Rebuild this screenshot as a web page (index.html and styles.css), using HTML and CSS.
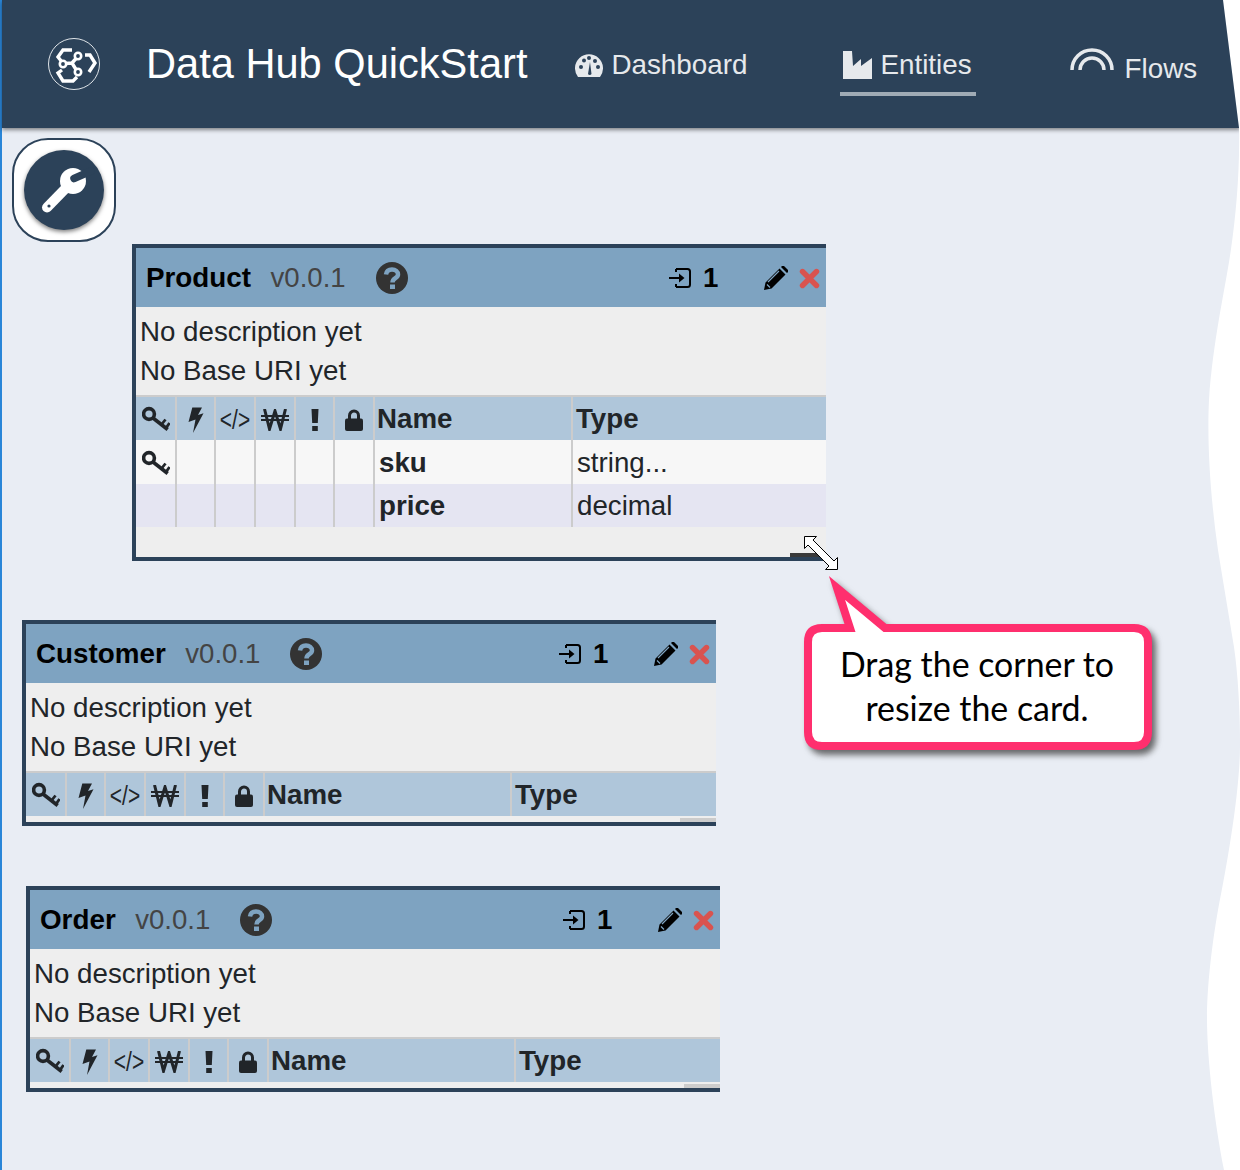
FILE: index.html
```html
<!DOCTYPE html>
<html lang="en">
<head>
<meta charset="UTF-8" />
<title>Data Hub QuickStart</title>
<link rel="stylesheet" href="styles.css">
</head>
<body>
<svg class="sprite" width="0" height="0">
  <defs>
    <symbol id="i-key" viewBox="0 0 28 28">
      <g fill="none" stroke="currentColor" stroke-width="3.600">
        <circle cx="7" cy="8" r="5.400"/>
        <path d="M11 12L25.700 23.500"/>
      </g>
      <g fill="none" stroke="currentColor" stroke-width="2.800">
        <path d="M19.500 18.500L23.500 13.500M24 22L27.500 17"/>
      </g>
    </symbol>
    <symbol id="i-bolt" viewBox="0 0 16 28">
      <path fill="currentColor" d="M4.300 1.500H14L10 9L15.500 7.300L5 27L7.500 13.500L.5 16Z"/>
    </symbol>
    <symbol id="i-won" viewBox="0 0 28 22">
      <path fill="none" stroke="currentColor" stroke-width="3" d="M3.500 0L8.500 20L14 2L19.500 20L24.500 0"/>
      <path fill="none" stroke="currentColor" stroke-width="2" d="M0 7H28M0 11H28"/>
    </symbol>
    <symbol id="i-bang" viewBox="0 0 8 22">
      <path fill="currentColor" d="M.5 0H7.500L6.800 14H1.200ZM1.200 17H6.800V22H1.200Z"/>
    </symbol>
    <symbol id="i-lock" viewBox="0 0 18 22">
      <path fill="none" stroke="currentColor" stroke-width="3" d="M4.500 10V6.500A4.500 4.500 0 0 1 13.500 6.500V10"/>
      <rect fill="currentColor" y="9.500" width="18" height="12.500" rx="2"/>
    </symbol>
    <symbol id="i-help" viewBox="0 0 32 32">
      <circle fill="currentColor" cx="16" cy="16" r="16"/>
      <path fill="none" stroke="#7ea3c1" stroke-width="4.500" d="M10 12.500C10.500 9 13 7.500 16 7.500C19.500 7.500 22 9.500 22 12.500C22 16.500 16.500 16 16.500 20.500"/>
      <rect fill="#7ea3c1" x="14" y="22.500" width="5" height="4.500"/>
    </symbol>
    <symbol id="i-signin" viewBox="0 0 22 20">
      <path fill="none" stroke="currentColor" stroke-width="2" d="M7 1H18.500Q21 1 21 3.500V16.500Q21 19 18.500 19H7M7 1V4M7 16V19M0 10H13"/>
      <path fill="currentColor" d="M10 5.500L15.500 10L10 14.500Z"/>
    </symbol>
    <symbol id="i-pencil" viewBox="0 0 24 24">
      <path fill="currentColor" d="M0 24L1.500 16.500L15.500 2.500L21.500 8.500L7.500 22.500ZM17 1L18 0Q19 -.5 20 0L24 4Q24.500 5 24 6L23 7Z"/>
      <path fill="none" stroke="#7ea3c1" stroke-width="1.200" d="M4 16L15 5M3 18.500L6 21.500"/>
    </symbol>
    <symbol id="i-times" viewBox="0 0 21 21">
      <path fill="none" stroke="currentColor" stroke-width="5.400" stroke-linecap="round" d="M3.500 3.500L17.500 17.500M17.500 3.500L3.500 17.500"/>
    </symbol>
  </defs>
</svg>

<div class="page">
  <header class="topbar">
    <svg class="logo" viewBox="0 0 52 52">
      <circle cx="26" cy="26" r="25.500" fill="none" stroke="#dfe4e8" stroke-width="1"/>
      <g fill="none" stroke="#fff" stroke-width="3.400">
        <path d="M24 12H15L10 19L14 24"/>
        <path d="M14 32L10 35L15 43H25L29 39"/>
        <path d="M37 17H42L47 25L41 34"/>
        <path d="M24 25L17.500 25.500M24 25L28 20.500M24 25L28 31.500"/>
      </g>
      <g fill="#2c4259" stroke="#fff" stroke-width="2.600">
        <circle cx="30" cy="18" r="3.200"/>
        <circle cx="15" cy="26" r="3.200"/>
        <circle cx="30" cy="34" r="3.200"/>
      </g>
    </svg>
    <h1 class="app-title">Data Hub QuickStart</h1>
    <nav class="nav">
      <a class="nav-item nav-dash">
        <svg class="nav-icon-dash" viewBox="0 0 28 24">
          <path fill="currentColor" d="M3 24A14 14 0 1 1 25 24Z"/>
          <g fill="#2c4259">
            <circle cx="6" cy="14" r="2"/><circle cx="9" cy="7.500" r="2"/><circle cx="14" cy="5" r="2"/><circle cx="20" cy="8" r="2"/><circle cx="23" cy="14" r="2"/>
            <path d="M13 21L15 9L16.500 21A2 2 0 0 1 13 21Z"/>
          </g>
        </svg>
        Dashboard
      </a>
      <a class="nav-item nav-entities active">
        <svg class="nav-icon-ent" viewBox="0 0 29 28">
          <path fill="currentColor" d="M0 0H9L10 15L18 8V15L29 7V28H0Z"/>
        </svg>
        Entities
      </a>
      <a class="nav-item nav-flows">
        <svg class="nav-icon-flow" viewBox="0 0 44 24">
          <path fill="none" stroke="currentColor" stroke-width="3.500" d="M2 23A20 20 0 0 1 42 23M10 23A12 12 0 0 1 34 23"/>
        </svg>
        Flows
      </a>
    </nav>
  </header>

  <main class="canvas">
    <button class="tool-btn">
      <span class="tool-circle">
        <svg viewBox="0 0 80 80" width="80" height="80">
          <circle cx="49" cy="31" r="13" fill="#fff"/>
          <path d="M50 28.500L67 21" stroke="#2c4259" stroke-width="7.500" stroke-linecap="round"/>
          <path d="M43 37L23 57.500" stroke="#fff" stroke-width="10" stroke-linecap="round"/>
          <circle cx="25" cy="56" r="1.600" fill="#2c4259"/>
        </svg>
      </span>
    </button>

    <section class="card card-product">
      <div class="card-head">
        <b class="card-name">Product</b>
        <span class="card-version">v0.0.1</span>
        <svg class="ic-help"><use href="#i-help"/></svg>
        <svg class="ic-signin"><use href="#i-signin"/></svg>
        <b class="card-count">1</b>
        <svg class="ic-pencil"><use href="#i-pencil"/></svg>
        <svg class="ic-times"><use href="#i-times"/></svg>
      </div>
      <div class="card-desc">
        <div>No description yet</div>
        <div>No Base URI yet</div>
      </div>
      <table class="props">
        <thead>
          <tr>
            <th><svg class="ic-key"><use href="#i-key"/></svg></th>
            <th><svg class="ic-bolt"><use href="#i-bolt"/></svg></th>
            <th><span class="code">&lt;/&gt;</span></th>
            <th><svg class="ic-won"><use href="#i-won"/></svg></th>
            <th><svg class="ic-bang"><use href="#i-bang"/></svg></th>
            <th><svg class="ic-lock"><use href="#i-lock"/></svg></th>
            <th class="th-name">Name</th>
            <th class="th-type">Type</th>
          </tr>
        </thead>
        <tbody>
          <tr>
            <td><svg class="ic-key"><use href="#i-key"/></svg></td>
            <td></td><td></td><td></td><td></td><td></td>
            <td class="td-name">sku</td>
            <td class="td-type">string...</td>
          </tr>
          <tr class="alt">
            <td></td><td></td><td></td><td></td><td></td><td></td>
            <td class="td-name">price</td>
            <td class="td-type">decimal</td>
          </tr>
        </tbody>
      </table>
      <div class="handle handle-drag"></div>
    </section>

    <section class="card card-customer">
      <div class="card-head">
        <b class="card-name">Customer</b>
        <span class="card-version">v0.0.1</span>
        <svg class="ic-help"><use href="#i-help"/></svg>
        <svg class="ic-signin"><use href="#i-signin"/></svg>
        <b class="card-count">1</b>
        <svg class="ic-pencil"><use href="#i-pencil"/></svg>
        <svg class="ic-times"><use href="#i-times"/></svg>
      </div>
      <div class="card-desc">
        <div>No description yet</div>
        <div>No Base URI yet</div>
      </div>
      <table class="props props-wide">
        <thead>
          <tr>
            <th><svg class="ic-key"><use href="#i-key"/></svg></th>
            <th><svg class="ic-bolt"><use href="#i-bolt"/></svg></th>
            <th><span class="code">&lt;/&gt;</span></th>
            <th><svg class="ic-won"><use href="#i-won"/></svg></th>
            <th><svg class="ic-bang"><use href="#i-bang"/></svg></th>
            <th><svg class="ic-lock"><use href="#i-lock"/></svg></th>
            <th class="th-name">Name</th>
            <th class="th-type">Type</th>
          </tr>
        </thead>
      </table>
      <div class="handle"></div>
    </section>

    <section class="card card-order">
      <div class="card-head">
        <b class="card-name">Order</b>
        <span class="card-version">v0.0.1</span>
        <svg class="ic-help"><use href="#i-help"/></svg>
        <svg class="ic-signin"><use href="#i-signin"/></svg>
        <b class="card-count">1</b>
        <svg class="ic-pencil"><use href="#i-pencil"/></svg>
        <svg class="ic-times"><use href="#i-times"/></svg>
      </div>
      <div class="card-desc">
        <div>No description yet</div>
        <div>No Base URI yet</div>
      </div>
      <table class="props props-wide">
        <thead>
          <tr>
            <th><svg class="ic-key"><use href="#i-key"/></svg></th>
            <th><svg class="ic-bolt"><use href="#i-bolt"/></svg></th>
            <th><span class="code">&lt;/&gt;</span></th>
            <th><svg class="ic-won"><use href="#i-won"/></svg></th>
            <th><svg class="ic-bang"><use href="#i-bang"/></svg></th>
            <th><svg class="ic-lock"><use href="#i-lock"/></svg></th>
            <th class="th-name">Name</th>
            <th class="th-type">Type</th>
          </tr>
        </thead>
      </table>
      <div class="handle"></div>
    </section>

    <!-- mouse pointer on the corner of the first card -->
    <svg class="pointer" viewBox="0 0 35 35">
      <path fill="#fff" stroke="#000" stroke-width="1" d="M.5 .5H12.500L9 4L30 25L33.500 21.500V33.500H21.500L25 30L4 9L.5 12.500Z"/>
    </svg>

    <div class="callout">
      <svg class="callout-shape" viewBox="0 0 370 200">
        <path d="M22 58H50L37 18L85 58H334Q348 58 348 72V162Q348 176 334 176H22Q8 176 8 162V72Q8 58 22 58Z"/>
      </svg>
      <p class="callout-text">Drag the corner to<br>resize the card.</p>
    </div>
  </main>
</div>
</body>
</html>
```

FILE: styles.css
```css
html, body {
  margin: 0;
  padding: 0;
  background: #fff;
  overflow: hidden;
}
body {
  font-family: 'Liberation Sans', Arial, sans-serif;
  font-size: 27.7px;
  color: #212529;
}
.sprite {
  position: absolute;
}
.page {
  box-sizing: border-box;
  width: 1240px;
  height: 1170px;
  background: #e9edf4;
  border-left: 2px solid #2a86d8;
  /* torn paper edge on the right */
  clip-path: path("M0 0H1223L1239 128C1240 170 1236 215 1231 249C1226 285 1213 340 1209 400C1207 440 1210 495 1218 550C1222 575 1228 610 1234 647C1238 675 1240 710 1240 745C1240 790 1228 860 1218 910C1211 950 1207 990 1207 1018C1207 1060 1215 1125 1224 1170H0Z");
}

/* top bar */
.topbar {
  display: flex;
  align-items: center;
  height: 128px;
  padding-left: 46px;
  background: #2c4259;
  box-shadow: 0 2px 4px rgba(0,0,0,0.45);
  position: relative;
}
.logo {
  width: 52px;
  height: 52px;
  flex: none;
}
.app-title {
  margin: 0 0 0 46px;
  font-size: 41.6px;
  font-weight: normal;
  color: #fff;
  white-space: nowrap;
}
.nav {
  display: flex;
  align-items: center;
  font-size: 27.8px;
  color: #e6e9ec;
  white-space: nowrap;
}
.nav-item {
  display: flex;
  align-items: center;
  gap: 8px;
}
.nav-dash {
  margin-left: 48px;
  margin-top: 2px;
}
.nav-icon-dash {
  width: 28px;
  height: 24px;
}
.nav-entities {
  margin-left: 93px;
  margin-top: 6px;
  padding: 0 4px 0 3px;
  height: 54px;
  border-bottom: 4px solid #a0abb5;
}
.nav-icon-ent {
  width: 29px;
  height: 28px;
}
.nav-flows {
  margin-left: 94px;
  margin-top: 10px;
  gap: 11px;
}
.nav-icon-flow {
  width: 44px;
  height: 24px;
  margin-top: -20px;
}

/* free canvas with the cards */
.canvas {
  position: relative;
}
.tool-btn {
  position: absolute;
  left: 10px;
  top: 10px;
  box-sizing: border-box;
  width: 104px;
  height: 104px;
  padding: 0;
  background: #fff;
  border: 2px solid #2c4259;
  border-radius: 36px;
  display: flex;
  align-items: center;
  justify-content: center;
}
.tool-circle {
  display: block;
  width: 80px;
  height: 80px;
  border-radius: 50%;
  background: #2c4259;
  box-shadow: 0 2px 4px rgba(0,0,0,0.5);
}
.tool-circle svg {
  display: block;
}

.card {
  position: absolute;
  box-sizing: border-box;
  width: 694px;
  border: 4px solid #2c4259;
  border-right: none;
  background: #eee;
  overflow: hidden;
}
.card-product { left: 130px; top: 116px; height: 317px; }
.card-customer { left: 20px; top: 492px; height: 206px; }
.card-order { left: 24px; top: 758px; height: 206px; }

.card-head {
  display: flex;
  align-items: center;
  height: 59px;
  padding-left: 10px;
  background: #7ea3c1;
  color: #000;
}
.card-name {
  font-size: 27.8px;
  font-weight: bold;
}
.card-version {
  margin-left: 19.500px;
  font-size: 27.6px;
  color: #444;
}
.ic-help {
  width: 32px;
  height: 32px;
  margin-left: 30px;
  color: #333;
}
.ic-signin {
  width: 22px;
  height: 20px;
  margin-left: auto;
}
.card-count {
  width: 15px;
  margin-left: 12px;
  margin-top: 1px;
}
.ic-pencil {
  width: 24px;
  height: 24px;
  margin-left: 46px;
}
.ic-times {
  width: 21px;
  height: 21px;
  margin-left: 11px;
  margin-right: 6px;
  margin-top: 1px;
  color: #d9534f;
}
.card-desc {
  padding: 5px 4px;
  line-height: 39px;
  color: #212529;
}

.props {
  width: 690px;
  table-layout: fixed;
  border-collapse: separate;
  border-spacing: 0;
  border-top: 2px solid #ccc;
}
.props th, .props td {
  box-sizing: border-box;
  padding: 0;
  border-right: 2px solid #ccc;
  text-align: center;
  vertical-align: middle;
}
.props th {
  height: 43px;
  background: #afc6da;
  font-weight: bold;
}
.props td {
  height: 44px;
  background: #f7f7f7;
}
.props .alt td {
  height: 43px;
  background: #e5e5f2;
}
.props th:nth-child(1) { width: 41px; }
.props th:nth-child(2) { width: 39px; }
.props th:nth-child(3) { width: 40px; }
.props th:nth-child(4) { width: 40px; }
.props th:nth-child(5) { width: 39px; }
.props th:nth-child(6) { width: 40px; }
.props th:nth-child(7) { width: 198px; }
.props-wide th:nth-child(7) { width: 247px; }
.props th:last-child, .props td:last-child { border-right: none; }
.props svg {
  display: inline-block;
  vertical-align: middle;
}
.code {
  display: inline-block;
  font-size: 21px;
  font-weight: normal;
  transform: translateY(-1px) scaleY(1.3);
}
.props .th-name, .props .th-type, .props .td-name, .props .td-type {
  text-align: left;
}
.props .th-name { padding-left: 2px; }
.props .th-type { padding-left: 3px; }
.props .td-name { padding: 2px 0 0 4px; font-weight: bold; }
.props .td-type { padding: 2px 0 0 4px; }
.props .alt .td-name, .props .alt .td-type { padding-top: 0; }
.ic-key { width: 28px; height: 28px; }
.ic-bolt { width: 16px; height: 28px; }
.ic-won { width: 28px; height: 22px; }
.ic-bang { width: 8px; height: 22px; }
.ic-lock { width: 18px; height: 22px; }

.handle {
  position: absolute;
  right: 0;
  bottom: 0;
  width: 36px;
  height: 4px;
  background: #ccc;
}
.handle-drag {
  background: #3a3a3a;
}

.pointer {
  position: absolute;
  left: 802px;
  top: 408px;
  width: 35px;
  height: 35px;
}

.callout {
  position: absolute;
  left: 798px;
  top: 442px;
  width: 370px;
  height: 200px;
}
.callout-shape {
  position: absolute;
  left: 0;
  top: 0;
  width: 370px;
  height: 200px;
  overflow: visible;
  filter: drop-shadow(4px 5px 3px rgba(60,60,60,0.75));
}
.callout-shape path {
  fill: #fff;
  stroke: #ff2f6e;
  stroke-width: 8;
  stroke-miterlimit: 10;
}
.callout-text {
  position: relative;
  width: 354px;
  margin: 0;
  padding-top: 72px;
  font-family: Lato, sans-serif;
  font-size: 33.900px;
  line-height: 44px;
  text-align: center;
  color: #000;
}
```
